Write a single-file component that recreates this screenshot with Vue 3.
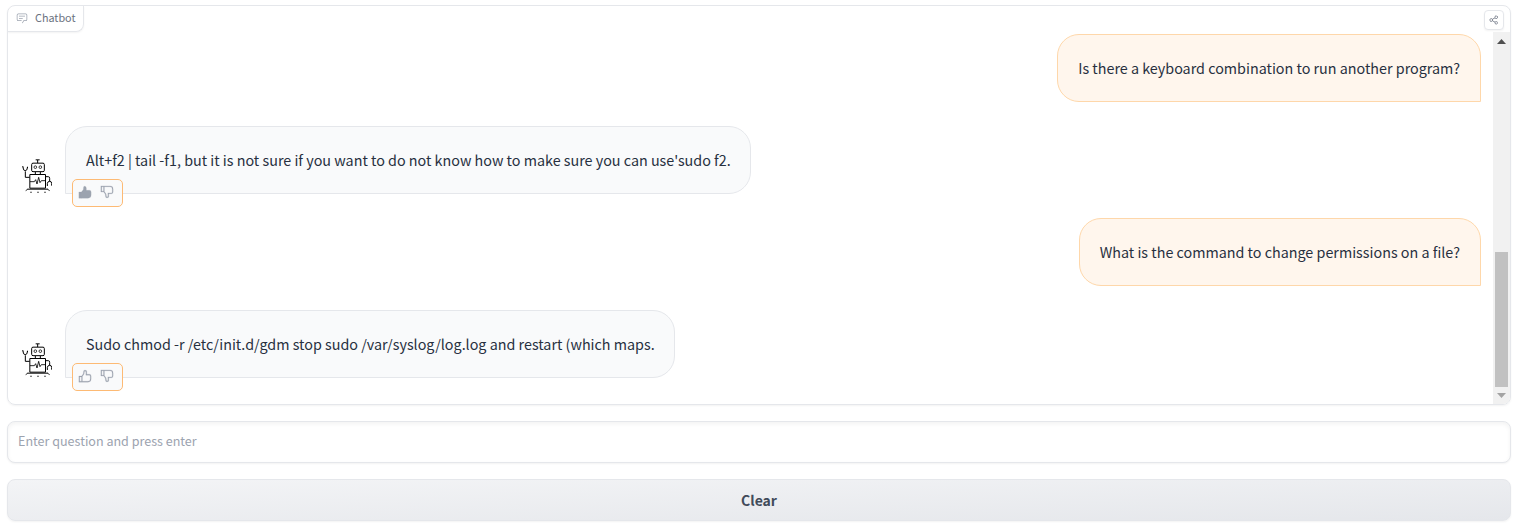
<script setup>
import { ref } from 'vue'

const messages = [
  { id: 1, role: 'user', size: 'w1', text: 'Is there a keyboard combination to run another program?' },
  { id: 2, role: 'bot', size: 'w2', liked: true, text: "Alt+f2 | tail -f1, but it is not sure if you want to do not know how to make sure you can use'sudo f2." },
  { id: 3, role: 'user', size: 'w3', text: 'What is the command to change permissions on a file?' },
  { id: 4, role: 'bot', size: 'w4', liked: false, text: 'Sudo chmod -r /etc/init.d/gdm stop sudo /var/syslog/log.log and restart (which maps.' },
]
const question = ref('')
const thumb = 'M26 12H20V6a3 3 0 0 0-3-3H14.867a2.01 2.01 0 0 0-1.98 1.717l-.845 5.917L8.465 16H2V30H23a7 7 0 0 0 7-7V16A4 4 0 0 0 26 12ZM8 28H4V18H8Zm20-5a5 5 0 0 1-5 5H10V17.303l3.958-5.937L14.867 5H17a1 1 0 0 1 1 1v8h8a2 2 0 0 1 2 2Z'
const thumbSolid = 'M2 16h5.700v14H2z M23 30H7.700V16l4.342-5.366.845-5.917A2.01 2.01 0 0 1 14.867 3H15a4 4 0 0 1 4 4v5h7a4 4 0 0 1 4 4v7a7 7 0 0 1-7 7z'
</script>

<template>
  <main class="page">
    <section class="panel">
      <header class="head">
        <div class="label">
          <svg class="chat-icon" viewBox="0 0 32 32">
            <path d="M17.74 30 16 29l4-7h6a2 2 0 0 0 2-2V8a2 2 0 0 0-2-2H6a2 2 0 0 0-2 2v12a2 2 0 0 0 2 2h9v2H6a4 4 0 0 1-4-4V8a4 4 0 0 1 4-4h20a4 4 0 0 1 4 4v12a4 4 0 0 1-4 4h-4.84ZM8 10h16v2H8zM8 16h10v2H8z" />
          </svg>
          <span>Chatbot</span>
        </div>
        <button class="share" aria-label="Share">
          <svg viewBox="0 0 32 32">
            <path d="M23 20a5 5 0 0 0-3.89 1.89l-7.31-4.57a4.46 4.46 0 0 0 0-2.64l7.31-4.57A5 5 0 1 0 18 7a4.79 4.79 0 0 0 .2 1.32l-7.31 4.57a5 5 0 1 0 0 6.22l7.31 4.57A4.79 4.79 0 0 0 18 25a5 5 0 1 0 5-5Zm0-16a3 3 0 1 1-3 3 3 3 0 0 1 3-3ZM7 19a3 3 0 1 1 3-3 3 3 0 0 1-3 3Zm16 9a3 3 0 1 1 3-3 3 3 0 0 1-3 3Z" />
          </svg>
        </button>
      </header>

      <div class="body">
        <div class="messages">
          <div v-for="m in messages" :key="m.id" class="row" :class="m.role">
            <svg v-if="m.role === 'bot'" class="robot" viewBox="21 24 90 108">
              <g fill="none" stroke="#000" stroke-width="3" stroke-linejoin="round">
                <path d="M68 30v9M62 29.500h12M61 66v6M76 66v6" />
                <rect x="50" y="39.500" width="38" height="25.500" rx="4" />
                <rect x="44.500" y="73.500" width="47" height="41" />
                <path d="M24 51q0 11 6.500 11q7 0 7-11M31 64v18h13M92 80h8q4 0 4 5v9M97 108v-8q1-6 7-6t6 6v7" />
                <path d="M45 95h13l4-6 4 13 5-20 4 16 4-6h12" stroke-width="2.500" />
                <path d="M37 117.500h62" />
                <path d="M32 122l6-4M98 118l6 4" stroke-width="2.500" />
              </g>
              <g fill="none" stroke="#000" stroke-width="2.300">
                <circle cx="61" cy="51.500" r="4" /><circle cx="76" cy="51.500" r="4" />
              </g>
              <path d="M46 125h4v3h-4zM67 125h4v3h-4zM88 125h4v3h-4zM22 48h3v4h-3zM36 50h3v4h-3z" />
            </svg>
            <div class="bubble" :class="m.size">
              <span>{{ m.text }}</span>
              <div v-if="m.role === 'bot'" class="rating">
                <svg viewBox="0 0 32 32"><path :d="m.liked ? thumbSolid : thumb" /></svg>
                <svg viewBox="0 0 32 32"><path :d="thumb" transform="matrix(1 0 0 -1 0 32)" /></svg>
              </div>
            </div>
          </div>
        </div>
        <div class="scrollbar">
          <svg class="arrow" viewBox="0 0 9 5"><path d="M4.500 0 9 5H0z" fill="#505050" /></svg>
          <div class="handle"></div>
          <svg class="arrow" viewBox="0 0 9 5"><path d="M0 0h9L4.500 5z" fill="#a3a3a3" /></svg>
        </div>
      </div>
    </section>

    <input v-model="question" class="question" placeholder="Enter question and press enter" />
    <button class="clear">Clear</button>
  </main>
</template>

<style>
body { margin: 0; background: #fff; }
</style>

<style scoped>
.page {
  box-sizing: border-box;
  width: 1525px;
  height: 532px;
  padding: 5px 14px 0 7px;
  display: flex;
  flex-direction: column;
  gap: 16px;
  overflow: hidden;
  font-family: "Source Sans Pro", "Noto Sans CJK SC", sans-serif;
  color: #27303f;
}
.page * { box-sizing: border-box; }
.panel {
  height: 400px;
  border: 1px solid #e5e7eb;
  border-radius: 8px;
  box-shadow: 0 1px 2px rgba(0, 0, 0, .05);
  overflow: hidden;
  display: flex;
  flex-direction: column;
}
.head {
  height: 26px;
  flex: none;
  display: flex;
  justify-content: space-between;
  align-items: flex-start;
  padding-right: 6px;
}
.label {
  width: 76px;
  height: 26px;
  display: flex;
  align-items: center;
  gap: 7px;
  padding: 0 0 2px 8px;
  border-right: 1px solid #e5e7eb;
  border-bottom: 1px solid #e5e7eb;
  border-radius: 0 0 8px 0;
  box-shadow: 0 1px 2px rgba(0, 0, 0, .05);
  font-size: 10.800px;
  line-height: 15px;
  color: #6b7280;
}
.chat-icon { width: 12px; height: 12px; flex: none; fill: #9ca3af; }
.share {
  width: 20px;
  height: 20px;
  margin-top: 4px;
  padding: 0;
  display: flex;
  align-items: center;
  justify-content: center;
  background: #fff;
  border: 1px solid #e5e7eb;
  border-radius: 4px;
  box-shadow: 0 1px 2px rgba(0, 0, 0, .05);
}
.share svg { width: 10px; height: 10px; fill: #6b7280; }
.body { flex: 1; display: flex; min-height: 0; }
.messages {
  flex: 1;
  padding: 2px 12px 0 14px;
  display: flex;
  flex-direction: column;
  gap: 24px;
}
.row { display: flex; height: 68px; flex: none; align-items: flex-end; }
.user { justify-content: flex-end; }
.robot { width: 30px; height: 36px; margin-right: 13px; flex: none; }
.bubble {
  position: relative;
  height: 68px;
  padding: 0 20px;
  display: flex;
  align-items: center;
  border: 1px solid #e5e7eb;
  border-radius: 22px 22px 22px 0;
  background: #f9fafb;
  font-size: 14.330px;
  line-height: 24px;
  white-space: nowrap;
}
.user .bubble {
  justify-content: flex-end;
  padding-right: 20px;
  border-color: #fed7aa;
  background: #fff6ed;
  border-radius: 22px 22px 0 22px;
}
.w1 { width: 424px; }
.w2 { width: 686px; }
.w3 { width: 402px; }
.w4 { width: 610px; }
.rating {
  position: absolute;
  left: 6px;
  bottom: -14px;
  width: 51px;
  height: 28px;
  padding: 0 0 2px 5px;
  display: flex;
  align-items: center;
  gap: 8px;
  background: #f9fafb;
  border: 1px solid #fdba74;
  border-radius: 5px;
}
.rating svg { width: 14px; height: 14px; fill: #9ca3af; stroke: #9ca3af; stroke-width: .5; }
.scrollbar {
  width: 17px;
  padding: 7px 0 6px;
  display: flex;
  flex-direction: column;
  align-items: center;
  background: #f1f1f1;
}
.arrow { width: 9px; height: 5px; flex: none; }
.handle { width: 13px; height: 135px; margin: auto 0 6px; background: #c1c1c1; }
.question {
  height: 42px;
  padding: 0 10px 4px;
  border: 1px solid #e5e7eb;
  border-radius: 8px;
  outline: none;
  box-shadow: 0 1px 2px rgba(0, 0, 0, .05), inset 0 2px 4px rgba(0, 0, 0, .05);
  font-family: inherit;
  font-size: 12.550px;
}
.question::placeholder { color: #9ca3af; opacity: 1; }
.clear {
  height: 42px;
  padding: 0;
  border: 1px solid #e5e7eb;
  border-radius: 8px;
  background: linear-gradient(to bottom right, #f3f4f6, #e5e7eb);
  box-shadow: 0 1px 2px rgba(0, 0, 0, .05);
  font-family: inherit;
  font-size: 14px;
  font-weight: 600;
  color: #414b5a;
}
</style>
